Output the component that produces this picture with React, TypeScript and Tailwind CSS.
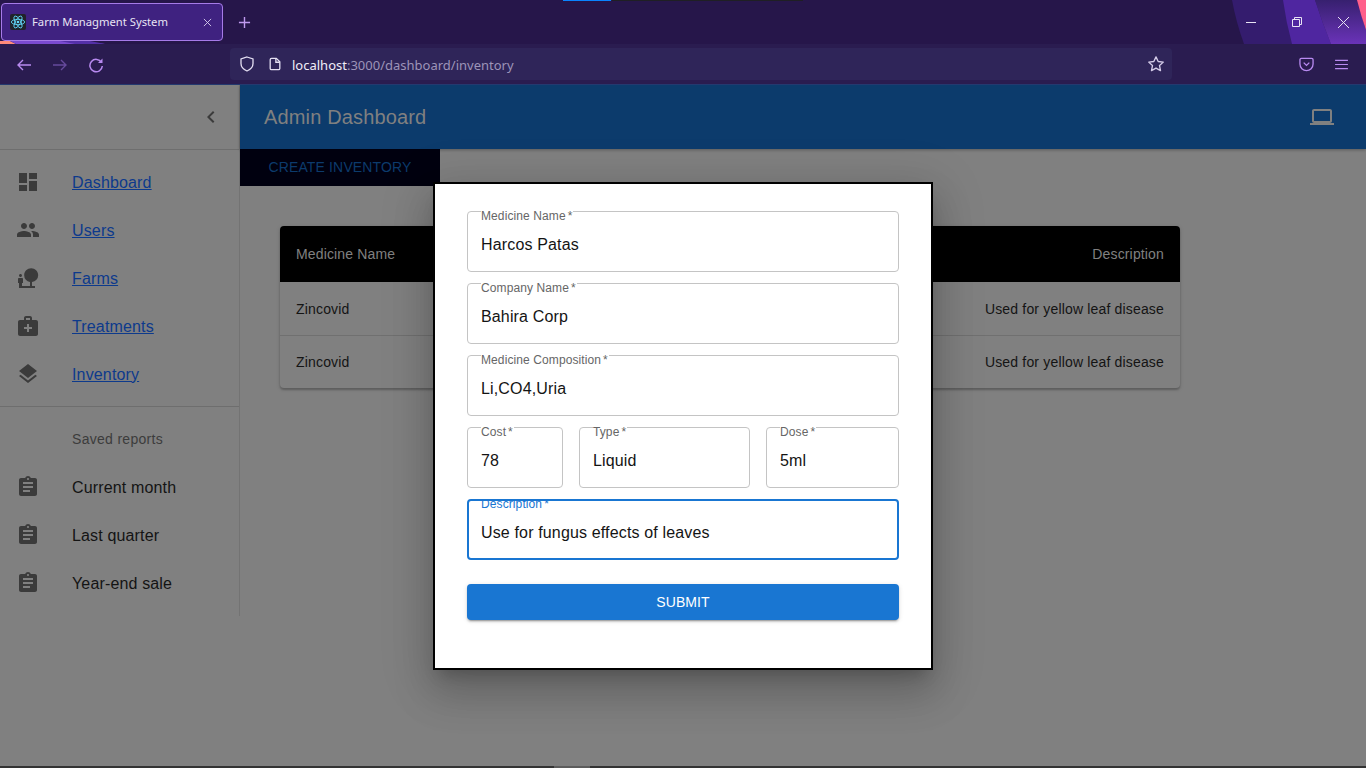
import {
  MdAssignment,
  MdChevronLeft,
  MdDashboard,
  MdLaptop,
  MdLayers,
  MdMedicalServices,
  MdNaturePeople,
  MdPeople,
} from "react-icons/md";
import type { IconType } from "react-icons";

const mainNav: { label: string; icon: IconType }[] = [
  { label: "Dashboard", icon: MdDashboard },
  { label: "Users", icon: MdPeople },
  { label: "Farms", icon: MdNaturePeople },
  { label: "Treatments", icon: MdMedicalServices },
  { label: "Inventory", icon: MdLayers },
];

const reports = ["Current month", "Last quarter", "Year-end sale"];

function ReactFavicon() {
  return (
    <div className="flex h-4 w-4 items-center justify-center rounded-[2px] bg-[#20232a]">
      <svg viewBox="0 0 24 24" className="h-4 w-4" fill="none" stroke="#61dafb" strokeWidth="1.3">
        <circle cx="12" cy="12" r="2" fill="#61dafb" stroke="none" />
        <ellipse cx="12" cy="12" rx="10" ry="4" />
        <ellipse cx="12" cy="12" rx="10" ry="4" transform="rotate(60 12 12)" />
        <ellipse cx="12" cy="12" rx="10" ry="4" transform="rotate(120 12 12)" />
      </svg>
    </div>
  );
}

// firefox theme artwork behind the tab strip
function ThemeArt() {
  return (
    <svg aria-hidden viewBox="0 0 1366 44" className="absolute left-0 top-0 h-[44px] w-[1366px]">
      <defs>
        <linearGradient id="band" x1="0" y1="0" x2="0" y2="1">
          <stop offset="0" stopColor="#37206f" />
          <stop offset="1" stopColor="#6a33b8" />
        </linearGradient>
      </defs>
      <path d="M0 41h10l6 3H0z" fill="#ff8a7a" />
      <path d="M10 41h65l30 3H16z" fill="#7a4ad0" />
      <path d="M60 41h30l15 3H75z" fill="#5430a8" />
      <path d="M1232 0H1366V44H1244Q1236 22 1232 0z" fill="#341c6e" />
      <path d="M1283 0H1315Q1322 22 1331 44H1292Q1286 22 1283 0z" fill="#4f26a0" />
      <path d="M1315 0H1357Q1361 16 1366 30V44H1331Q1322 22 1315 0z" fill="url(#band)" />
      <path d="M1357 0H1366V30Q1361 16 1357 0z" fill="#ff5f8a" />
    </svg>
  );
}

function TabStrip() {
  return (
    <div className="relative flex h-[44px] items-center pl-[1px]">
      <ThemeArt />
      <div className="relative flex h-[38px] w-[222px] items-center rounded-[4px] border border-[#a67be8] bg-[#3f2280] pl-[8px] pr-[10px]">
        <ReactFavicon />
        <span className="ml-[6px] flex-1 text-[11.25px] text-[#e8e4f4]">Farm Managment System</span>
        <svg viewBox="0 0 10 10" className="h-[9px] w-[9px]" stroke="#d8d0ee" strokeWidth="1">
          <path d="M1 1l8 8M9 1l-8 8" />
        </svg>
      </div>
      <svg viewBox="0 0 14 14" className="relative ml-[15px] h-[13px] w-[13px]" stroke="#c09af0" strokeWidth="1.5">
        <path d="M7 1v12M1 7h12" />
      </svg>
      <div className="absolute right-0 top-0 flex h-[44px] items-center">
        <div className="flex w-[46px] justify-center">
          <div className="h-px w-[10px] bg-[#e8e4f4]" />
        </div>
        <div className="flex w-[46px] justify-center">
          <svg viewBox="0 0 10 10" className="h-[10px] w-[10px]" fill="none" stroke="#e8e4f4" strokeWidth="1">
            <path d="M.5 2.500h7v7h-7zM2.500 2.500v-2h7v7h-2" />
          </svg>
        </div>
        <div className="flex w-[46px] justify-center">
          <svg viewBox="0 0 10 10" className="h-[11px] w-[11px]" stroke="#e8e4f4" strokeWidth=".9">
            <path d="M0 0l10 10M10 0L0 10" />
          </svg>
        </div>
      </div>
    </div>
  );
}

function NavBar() {
  return (
    <div className="flex h-[40px] items-center bg-[#2a1c50]">
      <div className="flex w-[230px] items-center gap-[20px] pl-[16px] pt-[1px]">
        <svg viewBox="0 0 16 16" className="h-[16px] w-[16px]" fill="none" stroke="#b88af0" strokeWidth="1.4">
          <path d="M15 8H2M7 3L2 8l5 5" />
        </svg>
        <svg viewBox="0 0 16 16" className="h-[16px] w-[16px]" fill="none" stroke="#664a9c" strokeWidth="1.4">
          <path d="M1 8h13M9 3l5 5-5 5" />
        </svg>
        <svg viewBox="0 0 16 16" className="h-[16px] w-[16px]" fill="none" stroke="#b88af0" strokeWidth="1.5">
          <path d="M13.500 5.500A6.200 6.200 0 1 0 14.300 9" />
          <path d="M14.500 1.500v4.500H10z" fill="#b88af0" stroke="none" />
        </svg>
      </div>
      <div className="flex h-[32px] w-[942px] items-center rounded-[4px] bg-[#2f2559] pl-[9px] pr-[7px]">
        <svg viewBox="0 0 16 16" className="h-[16px] w-[16px]" fill="none" stroke="#e4dff2" strokeWidth="1.3">
          <path d="M8 1l6 2v4.500c0 3.500-2.500 6-6 7.500-3.500-1.500-6-4-6-7.500V3z" />
        </svg>
        <svg viewBox="0 0 16 16" className="ml-[13px] h-[14px] w-[14px]" fill="none" stroke="#e4dff2" strokeWidth="1.500">
          <path d="M4 1.500h5.500l4 4V13a1.500 1.500 0 0 1-1.500 1.500H4A1.500 1.500 0 0 1 2.500 13V3A1.500 1.500 0 0 1 4 1.500z" />
          <path d="M9 1.500v4.500h4.500" />
        </svg>
        <span className="ml-[10px] flex-1 pt-[3px] text-[13px]">
          <span className="text-[#f0edf8]">localhost</span>
          <span className="text-[#9d94b8]">:3000/dashboard/inventory</span>
        </span>
        <svg viewBox="0 0 24 24" className="h-[18px] w-[18px]" fill="none" stroke="#d4cce8" strokeWidth="1.8" strokeLinejoin="round">
          <path d="M12 2.500l2.900 6.200 6.800.8-5 4.600 1.300 6.700-6-3.400-6 3.400 1.300-6.700-5-4.600 6.800-.8z" />
        </svg>
      </div>
      <div className="ml-auto flex items-center gap-[21px] pr-[18px]">
        <svg viewBox="0 0 16 16" className="h-[15px] w-[15px]" fill="none" stroke="#b88af0" strokeWidth="1.4">
          <path d="M2.500 1.500h11A1.500 1.500 0 0 1 15 3v4.500a7 7 0 0 1-14 0V3a1.500 1.500 0 0 1 1.500-1.500z" />
          <path d="M5 6l3 3 3-3" />
        </svg>
        <svg viewBox="0 0 14 12" className="h-[11px] w-[13px]" stroke="#b88af0" strokeWidth="1.2">
          <path d="M0 1.500h14M0 6h14M0 10.500h14" />
        </svg>
      </div>
    </div>
  );
}

function Sidebar() {
  return (
    <aside className="h-[531px] w-[240px] shrink-0 border-r border-[#737373]">
      <div className="flex h-[65px] items-center justify-end border-b border-[#6e6e6e] pr-[16px]">
        <MdChevronLeft className="text-[24px] text-[#3b3b3b]" />
      </div>
      <ul className="border-b border-[#6e6e6e] pb-[8px] pt-[8px]">
        {mainNav.map(({ label, icon: Icon }) => (
          <li key={label} className="flex h-[48px] items-center pl-[16px]">
            <Icon className="w-[24px] text-[24px] text-[#3b3b3b]" />
            <a href="#" className="ml-[32px] pt-[1px] text-[16px] tracking-[0.15px] text-[#0d3a8c] underline">
              {label}
            </a>
          </li>
        ))}
      </ul>
      <div className="pt-[8px]">
        <div className="flex h-[48px] items-center pl-[72px] pt-[1px] text-[14px] tracking-[0.3px] text-[#3c3c3c]">Saved reports</div>
        {reports.map((label) => (
          <div key={label} className="flex h-[48px] items-center pl-[16px]">
            <MdAssignment className="w-[24px] text-[24px] text-[#3b3b3b]" />
            <span className="ml-[32px] pt-[1px] text-[16px] tracking-[0.15px] text-[#141414]">{label}</span>
          </div>
        ))}
      </div>
    </aside>
  );
}

function InventoryTable() {
  return (
    <div className="relative ml-[40px] mt-[40px] w-[900px] rounded-[4px] shadow-[0_2px_2px_rgba(0,0,0,0.2),0_1px_4px_rgba(0,0,0,0.15)]">
      <div className="flex h-[56px] items-center justify-between rounded-t-[4px] bg-black px-[16px] text-[14px] tracking-[0.15px] text-[#808080]">
        <span>Medicine Name</span>
        <span>Description</span>
      </div>
      <div className="flex h-[54px] items-center justify-between border-b border-[#707070] px-[16px] pt-[1px] text-[14px] tracking-[0.17px] text-[#141414]">
        <span>Zincovid</span>
        <span>Used for yellow leaf disease</span>
      </div>
      <div className="flex h-[52px] items-center justify-between px-[16px] pt-[1px] text-[14px] tracking-[0.17px] text-[#141414]">
        <span>Zincovid</span>
        <span>Used for yellow leaf disease</span>
      </div>
    </div>
  );
}

function Field({ label, value, focused, className }: { label: string; value: string; focused?: boolean; className?: string }) {
  return (
    <div
      className={`relative h-[61px] rounded-[4px] bg-white ${
        focused ? "overflow-hidden border-2 border-[#1976d2] px-[12px]" : "border border-[#c4c4c4] px-[13px]"
      } ${className ?? ""}`}
    >
      <span
        className={`absolute whitespace-nowrap pr-[1px] text-[12px] leading-[14px] tracking-[0.1px] ${
          focused ? "left-[12px] top-[-4px] text-[#1976d2]" : "left-[13px] top-[-3px] bg-white text-[#666666]"
        }`}
      >
        {label}
        <span className="ml-[2px]">*</span>
      </span>
      <div className={`text-[16px] leading-[24px] tracking-[0.15px] text-[#141414] ${focused ? "pt-[20px]" : "pt-[21px]"}`}>{value}</div>
    </div>
  );
}

function InventoryModal() {
  return (
    <div className="absolute left-[433px] top-[182px] h-[488px] w-[500px] border-2 border-black bg-white px-[32px] pt-[27px] shadow-[0_11px_15px_-7px_rgba(0,0,0,0.2),0_24px_38px_3px_rgba(0,0,0,0.14),0_9px_46px_8px_rgba(0,0,0,0.12)]">
      <div className="flex flex-col gap-[11px]">
        <Field label="Medicine Name" value="Harcos Patas" />
        <Field label="Company Name" value="Bahira Corp" />
        <Field label="Medicine Composition" value="Li,CO4,Uria" />
        <div className="flex gap-[16px]">
          <Field label="Cost" value="78" className="w-[96px]" />
          <Field label="Type" value="Liquid" className="w-[171px]" />
          <Field label="Dose" value="5ml" className="w-[133px]" />
        </div>
        <Field label="Description" value="Use for fungus effects of leaves" focused />
      </div>
      <button className="mt-[24px] h-[36px] w-full rounded-[4px] bg-[#1976d2] text-[14px] tracking-[0.1px] text-white shadow-[0_3px_1px_-2px_rgba(0,0,0,0.2),0_2px_2px_0_rgba(0,0,0,0.14),0_1px_5px_0_rgba(0,0,0,0.12)]">
        SUBMIT
      </button>
    </div>
  );
}

export default function App() {
  return (
    <div className="relative h-[768px] w-[1366px] overflow-hidden bg-[#808080] font-['Liberation_Sans',Arial,sans-serif]">
      <div className="relative h-[85px] overflow-hidden border-b border-[#24396f] bg-[#26164a] font-['Noto_Sans','Open_Sans',sans-serif]">
        <div className="absolute left-[563px] top-0 flex h-px">
          <div className="w-[48px] bg-[#0a84ff]" />
          <div className="ml-px w-[191px] bg-[#1f1f24]" />
        </div>
        <TabStrip />
        <NavBar />
      </div>

      <div className="flex">
        <Sidebar />
        <main className="flex-1">
          <header className="flex h-[64px] items-center justify-between bg-[#0c3b6c] pl-[24px] pr-[32px] shadow-[0_1px_3px_rgba(0,0,0,0.3)]">
            <h1 className="text-[20px] font-medium tracking-[0.15px] text-[#808080]">Admin Dashboard</h1>
            <MdLaptop className="text-[24px] text-[#808080]" />
          </header>
          <div className="flex h-[37px] w-[200px] items-center justify-center bg-[#00000f] text-[14px] tracking-[0.15px] text-[#0c3b6c]">
            CREATE INVENTORY
          </div>
          <InventoryTable />
        </main>
      </div>

      <div className="absolute bottom-0 left-0 h-[2px] w-full bg-[#333333]">
        <div className="ml-[554px] h-[2px] w-[36px] bg-[#5c5c5c]" />
      </div>

      <InventoryModal />
    </div>
  );
}
